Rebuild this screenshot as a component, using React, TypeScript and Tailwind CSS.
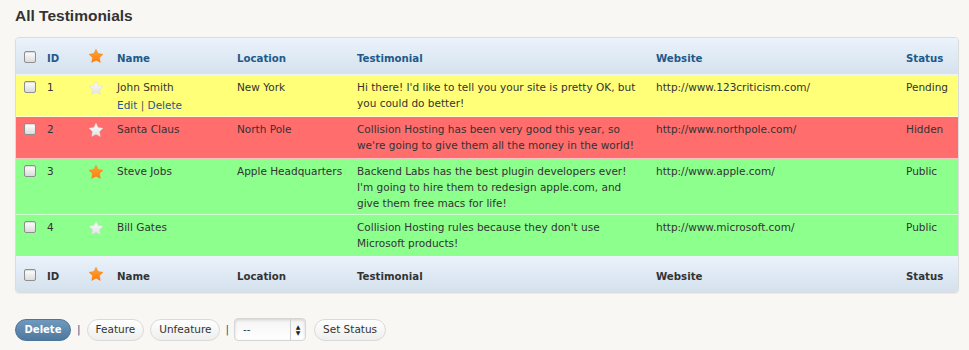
import React from "react";

type Row = {
  id: number;
  name: string;
  location: string;
  text: string;
  website: string;
  status: string;
  featured: boolean;
  tone: string;
  actions?: boolean;
};

const rows: Row[] = [
  {
    id: 1,
    name: "John Smith",
    location: "New York",
    text: "Hi there! I'd like to tell you your site is pretty OK, but you could do better!",
    website: "http://www.123criticism.com/",
    status: "Pending",
    featured: false,
    tone: "bg-[#ffff78]",
    actions: true,
  },
  {
    id: 2,
    name: "Santa Claus",
    location: "North Pole",
    text: "Collision Hosting has been very good this year, so we're going to give them all the money in the world!",
    website: "http://www.northpole.com/",
    status: "Hidden",
    featured: false,
    tone: "bg-[#ff6d6d]",
  },
  {
    id: 3,
    name: "Steve Jobs",
    location: "Apple Headquarters",
    text: "Backend Labs has the best plugin developers ever! I'm going to hire them to redesign apple.com, and give them free macs for life!",
    website: "http://www.apple.com/",
    status: "Public",
    featured: true,
    tone: "bg-[#8dff8d]",
  },
  {
    id: 4,
    name: "Bill Gates",
    location: "",
    text: "Collision Hosting rules because they don't use Microsoft products!",
    website: "http://www.microsoft.com/",
    status: "Public",
    featured: false,
    tone: "bg-[#8dff8d]",
  },
];

function Star({ on, className = "" }: { on: boolean; className?: string }) {
  const id = on ? "star-on" : "star-off";
  return (
    <svg viewBox="0 0 24 24" className={`block h-[16px] w-[16px] ${className}`}>
      <defs>
        <linearGradient id={id} x1="0" y1="0" x2="0" y2="1">
          <stop offset="0" stopColor={on ? "#ffa43a" : "#fbfbfb"} />
          <stop offset="1" stopColor={on ? "#ff7d0a" : "#e4e4e4"} />
        </linearGradient>
      </defs>
      <path
        d="M12 1.8l3.2 6.6 7.2 1-5.2 5.1 1.3 7.2L12 18.3l-6.5 3.4 1.3-7.2-5.2-5.1 7.2-1z"
        fill={`url(#${id})`}
        stroke={on ? "#f07a10" : "#dcdcdc"}
        strokeWidth="0.6"
        strokeLinejoin="round"
      />
    </svg>
  );
}

function Box() {
  return (
    <span className="block h-[12px] w-[12px] rounded-[2px] border border-[#8f8f8f] bg-gradient-to-b from-white to-[#dcdcdc] shadow-[inset_0_1px_1px_rgba(0,0,0,0.15)]" />
  );
}

function HeadRow({ dark }: { dark?: boolean }) {
  const th = `pt-[13px] pb-[7px] pl-[7px] text-left align-top font-bold leading-[16px] text-[10.2px] ${
    dark ? "text-[#333]" : "text-[#22598a]"
  }`;
  return (
    <tr className="bg-gradient-to-b from-[#ebf3fb] to-[#d4e1ed]">
      <th className="pt-[13px] pb-[7px] pl-[8px] align-top">
        <Box />
      </th>
      <th className={th}>ID</th>
      <th className="pt-[10px] pl-[7px] align-top">
        <Star on />
      </th>
      <th className={th}>Name</th>
      <th className={th}>Location</th>
      <th className={th}>Testimonial</th>
      <th className={th}>Website</th>
      <th className={th}>Status</th>
    </tr>
  );
}

function Pill({ children }: { children: React.ReactNode }) {
  return (
    <button className="h-[22px] rounded-full border border-[#dadada] bg-gradient-to-b from-white to-[#eeeeec] px-[8px] text-[10.5px] text-[#333]">
      {children}
    </button>
  );
}

export default function App() {
  const td = "pt-[4px] pb-[3px] pl-[7px] align-top";
  return (
    <div
      className="min-h-[350px] bg-[#f8f7f3] px-[15px] pt-[6px] text-[#333]"
      style={{ fontFamily: '"DejaVu Sans", Verdana, sans-serif' }}
    >
      <h2 className="text-[15.5px] font-bold leading-[20px] text-[#333]" style={{ fontFamily: '"Liberation Sans", Arial, sans-serif' }}>
        All Testimonials
      </h2>

      <div className="mt-[11px] w-[944px] overflow-hidden rounded-[4px] border border-[#dcdcdc] shadow-[0_1px_1px_rgba(0,0,0,0.05)]">
        <table className="w-full table-fixed border-collapse text-[10.5px] leading-[16px]">
          <colgroup>
            <col className="w-[24px]" />
            <col className="w-[41px]" />
            <col className="w-[29px]" />
            <col className="w-[120px]" />
            <col className="w-[120px]" />
            <col className="w-[299px]" />
            <col className="w-[250px]" />
            <col />
          </colgroup>
          <thead>
            <HeadRow />
          </thead>
          <tbody>
            {rows.map((r) => (
              <tr key={r.id} className={`${r.tone} border-t border-white/60`}>
                <td className="pt-[6px] pl-[8px] align-top">
                  <Box />
                </td>
                <td className={td}>{r.id}</td>
                <td className="pt-[5px] pl-[7px] align-top">
                  <Star on={r.featured} />
                </td>
                <td className={td}>
                  <div>{r.name}</div>
                  <div className={`mt-[2px] h-[16px] text-[#22598a] ${r.actions ? "" : "invisible"}`}>
                    Edit <span className="text-[#555]">|</span> Delete
                  </div>
                </td>
                <td className={td}>{r.location}</td>
                <td className={`${td} pr-[6px]`}>{r.text}</td>
                <td className={td}>{r.website}</td>
                <td className={td}>{r.status}</td>
              </tr>
            ))}
          </tbody>
          <tfoot>
            <HeadRow dark />
          </tfoot>
        </table>
      </div>

      <div className="mt-[25px] flex items-center text-[10.5px]">
        <button className="h-[22px] w-[56px] rounded-full border border-[#4d7499] bg-gradient-to-b from-[#7099bd] to-[#4f789f] text-[10px] font-bold text-white">
          Delete
        </button>
        <span className="mx-[6px] text-[#22598a]">|</span>
        <Pill>Feature</Pill>
        <span className="w-[6px]" />
        <Pill>Unfeature</Pill>
        <span className="mx-[5px] text-[#22598a]">|</span>
        <div className="flex h-[23px] w-[72px] items-center rounded-[4px] border border-[#d6d6d6] bg-gradient-to-b from-[#f4f4f4] to-[#ffffff] shadow-[inset_0_1px_3px_rgba(0,0,0,0.15)]">
          <span className="flex-1 pl-[8px] text-[#333]">--</span>
          <span className="flex h-full w-[15px] flex-col items-center justify-center border-l border-[#cfcfcf] text-[6px] leading-[6px] text-[#222]">
            <span>▲</span>
            <span>▼</span>
          </span>
        </div>
        <span className="w-[8px]" />
        <Pill>Set Status</Pill>
      </div>
    </div>
  );
}
